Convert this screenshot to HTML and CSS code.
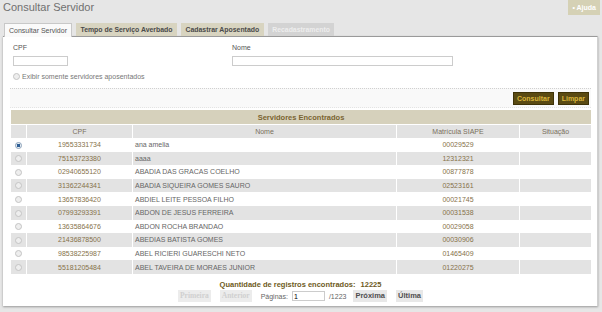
FILE: index.html
```html
<!DOCTYPE html>
<html lang="pt">
  <head>
    <meta charset="UTF-8" />
    <title>Consultar Servidor</title>
    <link rel="stylesheet" href="styles.css">
  </head>
  <body>
    <!-- topo -->
    <div class="top">
      <h1 class="title">Consultar Servidor</h1>
      <a class="help" href="#">&bull; Ajuda</a>
    </div>
    <!-- abas -->
    <div class="tabs">
      <span class="tab active">Consultar Servidor</span>
      <span class="tab">Tempo de Serviço Averbado</span>
      <span class="tab">Cadastrar Aposentado</span>
      <span class="tab off">Recadastramento</span>
    </div>
    <div class="panel">
      <div class="filters">
        <div class="field cpf">
          <label for="cpf">CPF</label>
          <input type="text" id="cpf" />
        </div>
        <div class="field nome">
          <label for="nome">Nome</label>
          <input type="text" id="nome" />
        </div>
      </div>
      <div class="check">
        <span class="radio"></span>Exibir somente servidores aposentados
      </div>
      <div class="actions">
        <button class="btn">Consultar</button>
        <button class="btn">Limpar</button>
      </div>
      <table class="result">
        <tr class="caption">
          <td colspan="5">Servidores Encontrados</td>
        </tr>
        <tr class="head">
          <td class="c-sel"></td>
          <td class="c-cpf">CPF</td>
          <td class="c-nome">Nome</td>
          <td class="c-mat">Matrícula SIAPE</td>
          <td class="c-sit">Situação</td>
        </tr>
        <tbody id="rows"></tbody>
      </table>
      <div class="total">Quantidade de registros encontrados: <b>12225</b></div>
      <div class="pager">
        <span class="pbtn disabled">Primeira</span>
        <span class="pbtn disabled">Anterior</span>
        <span class="plabel">Páginas:</span>
        <input type="text" class="page" value="1" />
        <span class="pcount">/1223</span>
        <span class="pbtn">Próxima</span>
        <span class="pbtn">Última</span>
      </div>
    </div>
    <script>
      let data = [
        ["19553331734", "ana amelia", "00029529"],
        ["75153723380", "aaaa", "12312321"],
        ["02940655120", "ABADIA DAS GRACAS COELHO", "00877878"],
        ["31362244341", "ABADIA SIQUEIRA GOMES SAURO", "02523161"],
        ["13657836420", "ABDIEL LEITE PESSOA FILHO", "00021745"],
        ["07993293391", "ABDON DE JESUS FERREIRA", "00031538"],
        ["13635864676", "ABDON ROCHA BRANDAO", "00029058"],
        ["21436878500", "ABEDIAS BATISTA GOMES", "00030906"],
        ["98538225987", "ABEL RICIERI GUARESCHI NETO", "01465409"],
        ["55181205484", "ABEL TAVEIRA DE MORAES JUNIOR", "01220275"],
      ];
      let rows = document.getElementById("rows");
      data.forEach((d, i) => {
        let tr = document.createElement("tr");
        tr.className = i % 2 ? "even" : "odd";
        let sel = i === 0 ? "radio on" : "radio";
        tr.innerHTML =
          `<td class="c-sel"><span class="${sel}"></span></td>` +
          `<td class="c-cpf">${d[0]}</td>` +
          `<td class="c-nome">${d[1]}</td>` +
          `<td class="c-mat">${d[2]}</td>` +
          `<td class="c-sit"></td>`;
        rows.appendChild(tr);
      });
    </script>
  </body>
</html>
```

FILE: styles.css
```css
* {
  padding: 0;
  margin: 0;
  box-sizing: border-box;
}
body {
  font-family: "Liberation Sans", Arial, sans-serif;
  font-size: 7px;
  color: #666;
  background: #e6e6e6;
  width: 602px;
  height: 312px;
  overflow: hidden;
}
.top {
  display: flex;
  justify-content: space-between;
  align-items: flex-start;
  height: 23px;
}
.title {
  font-size: 11px;
  font-weight: normal;
  color: #707070;
  padding: 1px 0 0 3px;
}
.help {
  margin-right: 2px;
  background: #d5d1b5;
  color: #fff;
  font-weight: bold;
  text-decoration: none;
  height: 15px;
  line-height: 15px;
  padding: 0 4px;
}
.tabs {
  display: flex;
  gap: 4px;
  padding-left: 4px;
  height: 13px;
}
.tab {
  background: #d8d4c0;
  color: #4a4a4a;
  font-weight: bold;
  font-size: 6.9px;
  padding: 0 4.5px;
  line-height: 13px;
}
.tab.active {
  background: #fafafa;
  border: 1px solid #c8c8c8;
  border-bottom: none;
  height: 14px;
  font-weight: normal;
  font-size: 7px;
  padding: 0 4px;
  color: #555;
  position: relative;
  z-index: 1;
}
.tab.off {
  background: #d3d3d3;
  color: #eee;
}
.panel {
  background: #fff;
  margin: 0 4px 0 3px;
  border-top: 1px solid #9a9a9a;
  border-right: 1px solid #d0d0d0;
  height: 270px;
  padding: 7px 6px 0 7px;
  box-shadow: 0 1px 2px #999;
}
.filters {
  display: flex;
  padding-left: 3px;
}
.field {
  display: flex;
  flex-direction: column;
  gap: 4px;
}
.field label {
  color: #555;
  line-height: 8px;
}
.field input {
  height: 10px;
  border: 1px solid #ccc;
  background: #fff;
}
.cpf {
  width: 219px;
}
.cpf input {
  width: 55px;
}
.nome input {
  width: 221px;
}
.check {
  display: flex;
  align-items: center;
  gap: 2px;
  margin: 6px 0 0 3px;
  height: 9px;
  color: #777;
}
.radio {
  display: inline-block;
  width: 7px;
  height: 7px;
  border-radius: 50%;
  border: 1px solid #c4c4c4;
  background: #eee;
}
.radio.on {
  border-color: #8aa0b8;
  background: radial-gradient(circle, #2f5f95 1.5px, #e8eef4 2px);
}
.actions {
  display: flex;
  justify-content: flex-end;
  gap: 4px;
  margin-top: 7px;
  height: 20px;
  padding: 3px 2px 0 0;
  background: #f9f9f9;
  border-top: 1px dotted #d0d0d0;
  border-bottom: 1px dotted #e4e4e4;
}
.btn {
  font-family: inherit;
  font-size: 7px;
  font-weight: bold;
  background: #5a4a12;
  color: #d9b43a;
  border: 1px solid #3e3208;
  height: 13px;
  padding: 0 3px;
}
.result {
  width: 582px;
  margin-top: 2px;
  border-collapse: separate;
  border-spacing: 1px 0;
}
.result td {
  height: 13.6px;
  padding: 0;
}
.caption td {
  background: #d6d1bc;
  color: #7a6430;
  font-weight: bold;
  text-align: center;
  font-size: 7.5px;
  height: 14px;
}
.head td {
  background: #e2e2e2;
  color: #7a705c;
  text-align: center;
  border-top: 1px solid #fff;
  height: 14px;
}
.c-sel {
  width: 15px;
  text-align: center;
}
.c-cpf {
  width: 105px;
  text-align: center;
  color: #86724a;
}
.c-nome {
  width: 263px;
  padding-left: 2px !important;
}
.head .c-nome {
  padding-left: 0 !important;
}
.c-mat {
  width: 122px;
  text-align: center;
  color: #86724a;
}
.c-sit {
  width: 71px;
}
.even td {
  background: #e3e3e3;
}
.result .c-sel .radio {
  vertical-align: middle;
}
.total {
  text-align: center;
  font-weight: bold;
  color: #6e5a22;
  margin-top: 6px;
  font-size: 7.5px;
}
.total b {
  margin-left: 3px;
}
.pager {
  display: flex;
  justify-content: center;
  align-items: center;
  gap: 5px;
  margin-top: 1px;
  height: 13px;
}
.pbtn {
  background: #e8e8e8;
  color: #4e4e4e;
  font-weight: bold;
  font-size: 7.5px;
  height: 12px;
  line-height: 12px;
  padding: 0 2px;
  margin: 0 2px;
}
.pbtn.disabled {
  color: #d0d0d0;
  background: #ececec;
  font-family: "Liberation Serif", serif;
}
.plabel {
  margin-left: 2px;
}
.page {
  width: 33px;
  height: 10px;
  border: 1px solid #ccc;
  font-family: inherit;
  font-size: 7px;
  padding-left: 1px;
  margin-left: -1px;
}
.pcount {
  margin-left: -1px;
}
```
